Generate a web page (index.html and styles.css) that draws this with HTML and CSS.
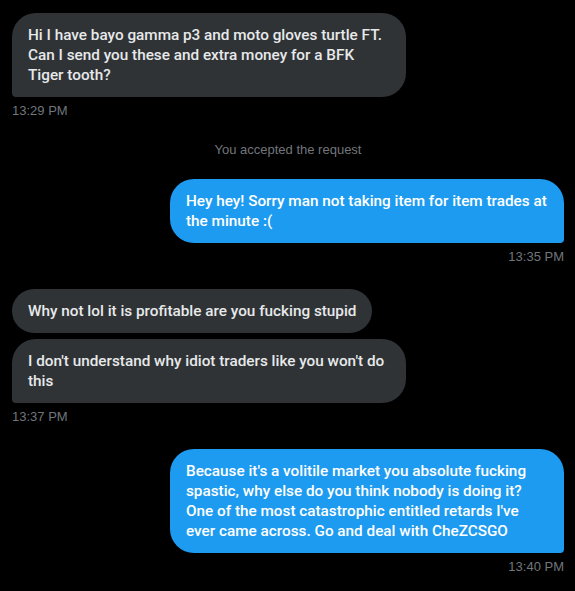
FILE: index.html
```html
<!DOCTYPE html>
<html lang="en">
<head>
<meta charset="utf-8">
<title>Messages</title>
<link rel="stylesheet" href="styles.css">
</head>
<body>
<main class="thread">
  <section class="group group--in">
    <div class="bubble bubble--in bubble--wide bubble--last">Hi I have bayo gamma p3 and moto gloves turtle FT.<br>Can I send you these and extra money for a BFK<br>Tiger tooth?</div>
    <div class="time">13:29 PM</div>
  </section>

  <div class="notice">You accepted the request</div>

  <section class="group group--out">
    <div class="bubble bubble--out bubble--wide bubble--last">Hey hey! Sorry man not taking item for item trades at<br>the minute :(</div>
    <div class="time">13:35 PM</div>
  </section>

  <section class="group group--in">
    <div class="bubble bubble--in">Why not lol it is profitable are you fucking stupid</div>
    <div class="bubble bubble--in bubble--wide bubble--last">I don't understand why idiot traders like you won't do<br>this</div>
    <div class="time">13:37 PM</div>
  </section>

  <section class="group group--out">
    <div class="bubble bubble--out bubble--wide bubble--last">Because it's a volitile market you absolute fucking<br>spastic, why else do you think nobody is doing it?<br>One of the most catastrophic entitled retards I've<br>ever came across. Go and deal with CheZCSGO</div>
    <div class="time">13:40 PM</div>
  </section>
</main>
</body>
</html>
```

FILE: styles.css
```css
* {
  box-sizing: border-box;
}

html, body {
  margin: 0;
  padding: 0;
  background: #000000;
}

body {
  font-family: "Liberation Sans", Arial, sans-serif;
  color: #e7e9ea;
}

.thread {
  display: flex;
  flex-direction: column;
  padding: 13px 11px 20px 12px;
}

.group {
  display: flex;
  flex-direction: column;
  gap: 6px;
  margin-bottom: 24px;
}

.group--in {
  align-items: flex-start;
}

.group--out {
  align-items: flex-end;
}

.bubble {
  max-width: 394px;
  padding: 12px 16px;
  font-family: Roboto, "Liberation Sans", Arial, sans-serif;
  font-weight: 500;
  font-size: 15.3px;
  line-height: 20px;
  white-space: nowrap;
  border-radius: 24px;
}

.bubble--wide {
  width: 394px;
}

.bubble--in {
  background: #2f3336;
  color: #e7e9ea;
}

.bubble--out {
  background: #1d9bf0;
  color: #ffffff;
}

.bubble--in.bubble--last {
  border-bottom-left-radius: 4px;
}

.bubble--out.bubble--last {
  border-bottom-right-radius: 4px;
}

.time {
  font-size: 13px;
  line-height: 16px;
  color: #71767b;
}

.notice {
  margin: -1px 0 21px;
  text-align: center;
  font-size: 13px;
  line-height: 16px;
  color: #71767b;
}
```
